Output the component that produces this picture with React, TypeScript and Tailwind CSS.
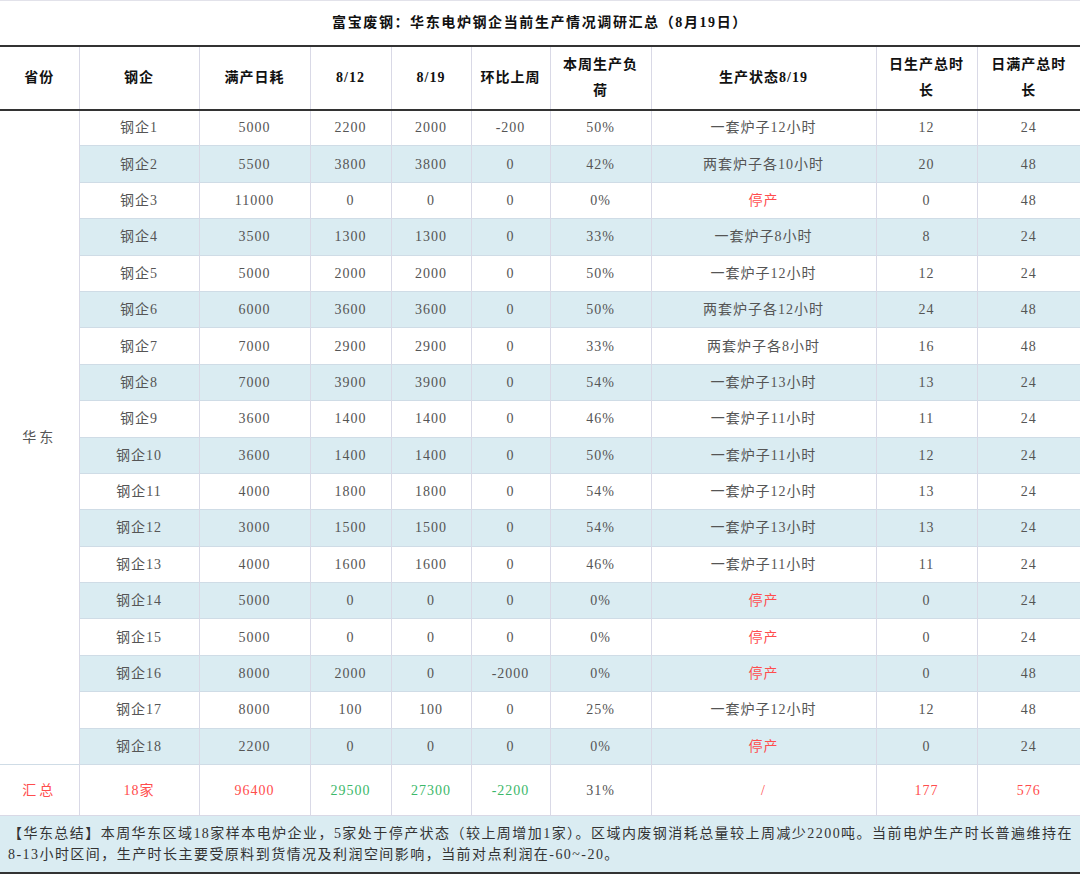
const font = { fontFamily: '"Liberation Serif", "Noto Sans CJK SC", serif' };

type Row = [string, string, string, string, string, string, string, string];

const rows: Row[] = [
  ["5000", "2200", "2000", "-200", "50%", "一套炉子12小时", "12", "24"],
  ["5500", "3800", "3800", "0", "42%", "两套炉子各10小时", "20", "48"],
  ["11000", "0", "0", "0", "0%", "停产", "0", "48"],
  ["3500", "1300", "1300", "0", "33%", "一套炉子8小时", "8", "24"],
  ["5000", "2000", "2000", "0", "50%", "一套炉子12小时", "12", "24"],
  ["6000", "3600", "3600", "0", "50%", "两套炉子各12小时", "24", "48"],
  ["7000", "2900", "2900", "0", "33%", "两套炉子各8小时", "16", "48"],
  ["7000", "3900", "3900", "0", "54%", "一套炉子13小时", "13", "24"],
  ["3600", "1400", "1400", "0", "46%", "一套炉子11小时", "11", "24"],
  ["3600", "1400", "1400", "0", "50%", "一套炉子11小时", "12", "24"],
  ["4000", "1800", "1800", "0", "54%", "一套炉子12小时", "13", "24"],
  ["3000", "1500", "1500", "0", "54%", "一套炉子13小时", "13", "24"],
  ["4000", "1600", "1600", "0", "46%", "一套炉子11小时", "11", "24"],
  ["5000", "0", "0", "0", "0%", "停产", "0", "24"],
  ["5000", "0", "0", "0", "0%", "停产", "0", "24"],
  ["8000", "2000", "0", "-2000", "0%", "停产", "0", "48"],
  ["8000", "100", "100", "0", "25%", "一套炉子12小时", "12", "48"],
  ["2200", "0", "0", "0", "0%", "停产", "0", "24"],
];

const widths = [79, 120, 111, 81, 80, 79, 101, 225, 101, 103];

const cell = "border-r border-[#d9d9e6] last:border-r-0 text-center align-middle";

export default function App() {
  return (
    <div className="w-[1080px] h-[874px] bg-white overflow-hidden" style={font}>
      <table className="w-[1080px] table-fixed border-collapse text-[14px]">
        <colgroup>
          {widths.map((w, i) => (
            <col key={i} style={{ width: w }} />
          ))}
        </colgroup>
        <thead>
          <tr className="h-[45px] border-t border-[#e2e2ea]">
            <th
              colSpan={10}
              className="text-center align-middle font-bold text-[14px] tracking-[1.6px] text-[#111]"
            >
              富宝废钢：华东电炉钢企当前生产情况调研汇总（8月19日）
            </th>
          </tr>
          <tr className="h-[64px] border-t-2 border-b-2 border-[#333] font-bold text-[#111] leading-[26px] tracking-[1px]">
            <th className={cell + " font-bold"}>省份</th>
            <th className={cell + " font-bold"}>钢企</th>
            <th className={cell + " font-bold"}>满产日耗</th>
            <th className={cell + " font-bold"}>8/12</th>
            <th className={cell + " font-bold"}>8/19</th>
            <th className={cell + " font-bold"}>环比上周</th>
            <th className={cell + " font-bold px-3"}>本周生产负荷</th>
            <th className={cell + " font-bold"}>生产状态8/19</th>
            <th className={cell + " font-bold px-3"}>日生产总时长</th>
            <th className={cell + " font-bold px-3"}>日满产总时长</th>
          </tr>
        </thead>
        <tbody className="text-[#555] tracking-[1px]">
          {rows.map((r, i) => {
            const blue = i % 2 === 1;
            return (
              <tr
                key={i}
                className={
                  "h-[36.4px] border-b border-[#cfdce6] " +
                  (blue ? "bg-[#daecf2]" : "bg-white")
                }
              >
                {i === 0 && (
                  <td
                    rowSpan={18}
                    className="bg-white border-r border-[#d9d9e6] text-center align-middle text-[#555] tracking-[3px]"
                  >
                    华东
                  </td>
                )}
                <td className={cell}>钢企{i + 1}</td>
                {r.map((v, j) => (
                  <td
                    key={j}
                    className={cell + (v === "停产" ? " text-[#ff4d4d]" : "")}
                  >
                    {v}
                  </td>
                ))}
              </tr>
            );
          })}
          <tr className="h-[51px] border-b border-[#d9d9e6] bg-white">
            <td className={cell + " text-[#ff4d4d] tracking-[3px]"}>汇总</td>
            <td className={cell + " text-[#ff4d4d]"}>18家</td>
            <td className={cell + " text-[#ff4d4d]"}>96400</td>
            <td className={cell + " text-[#3cb86a]"}>29500</td>
            <td className={cell + " text-[#3cb86a]"}>27300</td>
            <td className={cell + " text-[#3cb86a]"}>-2200</td>
            <td className={cell}>31%</td>
            <td className={cell + " text-[#ff4d4d]"}>/</td>
            <td className={cell + " text-[#ff4d4d]"}>177</td>
            <td className={cell + " text-[#ff4d4d]"}>576</td>
          </tr>
          <tr className="bg-[#daecf2] border-b-2 border-[#333]">
            <td colSpan={10} className="h-[56px] px-2 py-[7px] text-left leading-[21px] text-[#333] tracking-[1.45px]">
              <div className="whitespace-nowrap">
                【华东总结】本周华东区域18家样本电炉企业，5家处于停产状态（较上周增加1家）。区域内废钢消耗总量较上周减少2200吨。当前电炉生产时长普遍维持在
              </div>
              <div className="whitespace-nowrap">
                8-13小时区间，生产时长主要受原料到货情况及利润空间影响，当前对点利润在-60~-20。
              </div>
            </td>
          </tr>
        </tbody>
      </table>
    </div>
  );
}
